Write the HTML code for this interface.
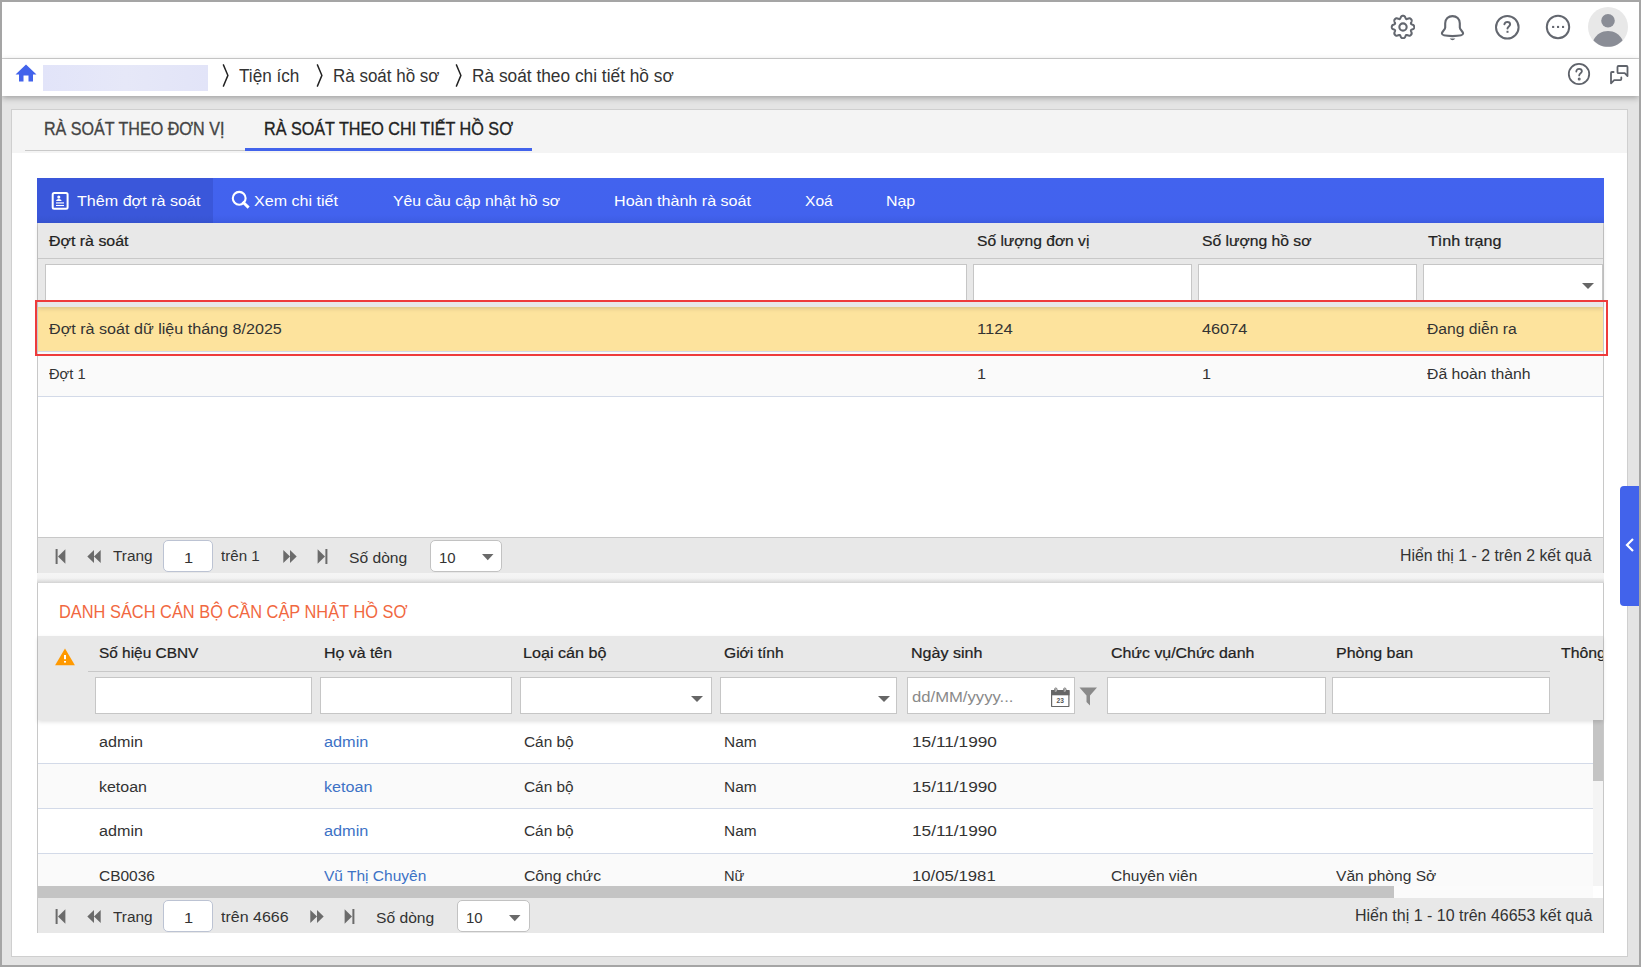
<!DOCTYPE html>
<html><head><meta charset="utf-8">
<style>
*{box-sizing:border-box;margin:0;padding:0}
html,body{width:1641px;height:967px;overflow:hidden;background:#e4e4e4;font-family:"Liberation Sans",sans-serif;color:#333;position:relative}
.a{position:absolute}
.t{position:absolute;white-space:nowrap;line-height:1}
.caret{position:absolute;width:0;height:0;border-left:6px solid transparent;border-right:6px solid transparent;border-top:6px solid #666}
</style></head><body>
<div class="a" style="left:0;top:0;width:1641px;height:967px;border:2px solid #a5a5a5;z-index:50"></div>
<div class="a" style="left:2px;top:2px;width:1637px;height:56px;background:#fff"></div>
<div class="a" style="left:2px;top:58px;width:1637px;height:1px;background:#d2d2d2"></div>
<div class="a" style="left:2px;top:59px;width:1637px;height:37px;background:#fff;box-shadow:0 2px 6px rgba(0,0,0,.3);z-index:3"></div>
<div class="a" style="left:11px;top:109px;width:1617px;height:848px;background:#fff;border:1px solid #cfcfcf"></div>
<div class="a" style="left:12px;top:110px;width:1615px;height:43px;background:#f4f4f4"></div>
<svg class="a" style="left:1390px;top:14px" width="25" height="25" viewBox="-0.5 -0.5 25 25" fill="none" stroke="#63676f" stroke-width="2.05"><path d="M12.50 1.30 L12.72 1.30 L12.94 1.32 L13.16 1.34 L13.37 1.40 L13.59 1.47 L13.79 1.58 L13.99 1.73 L14.18 1.91 L14.35 2.12 L14.52 2.36 L14.67 2.62 L14.81 2.89 L14.93 3.17 L15.05 3.45 L15.17 3.71 L15.28 3.95 L15.39 4.16 L15.51 4.34 L15.64 4.47 L15.79 4.55 L15.96 4.60 L16.14 4.60 L16.35 4.56 L16.58 4.49 L16.83 4.40 L17.09 4.30 L17.37 4.18 L17.66 4.08 L17.95 3.98 L18.25 3.90 L18.53 3.85 L18.80 3.82 L19.06 3.83 L19.31 3.87 L19.53 3.94 L19.73 4.03 L19.92 4.15 L20.10 4.28 L20.26 4.43 L20.42 4.58 L20.57 4.74 L20.72 4.90 L20.85 5.08 L20.97 5.27 L21.06 5.47 L21.13 5.69 L21.17 5.94 L21.18 6.20 L21.15 6.47 L21.10 6.75 L21.02 7.05 L20.92 7.34 L20.82 7.63 L20.70 7.91 L20.60 8.17 L20.51 8.42 L20.44 8.65 L20.40 8.86 L20.40 9.04 L20.45 9.21 L20.53 9.36 L20.66 9.49 L20.84 9.61 L21.05 9.72 L21.29 9.83 L21.55 9.95 L21.83 10.07 L22.11 10.19 L22.38 10.33 L22.64 10.48 L22.88 10.65 L23.09 10.82 L23.27 11.01 L23.42 11.21 L23.53 11.41 L23.60 11.63 L23.66 11.84 L23.68 12.06 L23.70 12.28 L23.70 12.50 L23.70 12.72 L23.68 12.94 L23.66 13.16 L23.60 13.37 L23.53 13.59 L23.42 13.79 L23.27 13.99 L23.09 14.18 L22.88 14.35 L22.64 14.52 L22.38 14.67 L22.11 14.81 L21.83 14.93 L21.55 15.05 L21.29 15.17 L21.05 15.28 L20.84 15.39 L20.66 15.51 L20.53 15.64 L20.45 15.79 L20.40 15.96 L20.40 16.14 L20.44 16.35 L20.51 16.58 L20.60 16.83 L20.70 17.09 L20.82 17.37 L20.92 17.66 L21.02 17.95 L21.10 18.25 L21.15 18.53 L21.18 18.80 L21.17 19.06 L21.13 19.31 L21.06 19.53 L20.97 19.73 L20.85 19.92 L20.72 20.10 L20.57 20.26 L20.42 20.42 L20.26 20.57 L20.10 20.72 L19.92 20.85 L19.73 20.97 L19.53 21.06 L19.31 21.13 L19.06 21.17 L18.80 21.18 L18.53 21.15 L18.25 21.10 L17.95 21.02 L17.66 20.92 L17.37 20.82 L17.09 20.70 L16.83 20.60 L16.58 20.51 L16.35 20.44 L16.14 20.40 L15.96 20.40 L15.79 20.45 L15.64 20.53 L15.51 20.66 L15.39 20.84 L15.28 21.05 L15.17 21.29 L15.05 21.55 L14.93 21.83 L14.81 22.11 L14.67 22.38 L14.52 22.64 L14.35 22.88 L14.18 23.09 L13.99 23.27 L13.79 23.42 L13.59 23.53 L13.37 23.60 L13.16 23.66 L12.94 23.68 L12.72 23.70 L12.50 23.70 L12.28 23.70 L12.06 23.68 L11.84 23.66 L11.63 23.60 L11.41 23.53 L11.21 23.42 L11.01 23.27 L10.82 23.09 L10.65 22.88 L10.48 22.64 L10.33 22.38 L10.19 22.11 L10.07 21.83 L9.95 21.55 L9.83 21.29 L9.72 21.05 L9.61 20.84 L9.49 20.66 L9.36 20.53 L9.21 20.45 L9.04 20.40 L8.86 20.40 L8.65 20.44 L8.42 20.51 L8.17 20.60 L7.91 20.70 L7.63 20.82 L7.34 20.92 L7.05 21.02 L6.75 21.10 L6.47 21.15 L6.20 21.18 L5.94 21.17 L5.69 21.13 L5.47 21.06 L5.27 20.97 L5.08 20.85 L4.90 20.72 L4.74 20.57 L4.58 20.42 L4.43 20.26 L4.28 20.10 L4.15 19.92 L4.03 19.73 L3.94 19.53 L3.87 19.31 L3.83 19.06 L3.82 18.80 L3.85 18.53 L3.90 18.25 L3.98 17.95 L4.08 17.66 L4.18 17.37 L4.30 17.09 L4.40 16.83 L4.49 16.58 L4.56 16.35 L4.60 16.14 L4.60 15.96 L4.55 15.79 L4.47 15.64 L4.34 15.51 L4.16 15.39 L3.95 15.28 L3.71 15.17 L3.45 15.05 L3.17 14.93 L2.89 14.81 L2.62 14.67 L2.36 14.52 L2.12 14.35 L1.91 14.18 L1.73 13.99 L1.58 13.79 L1.47 13.59 L1.40 13.37 L1.34 13.16 L1.32 12.94 L1.30 12.72 L1.30 12.50 L1.30 12.28 L1.32 12.06 L1.34 11.84 L1.40 11.63 L1.47 11.41 L1.58 11.21 L1.73 11.01 L1.91 10.82 L2.12 10.65 L2.36 10.48 L2.62 10.33 L2.89 10.19 L3.17 10.07 L3.45 9.95 L3.71 9.83 L3.95 9.72 L4.16 9.61 L4.34 9.49 L4.47 9.36 L4.55 9.21 L4.60 9.04 L4.60 8.86 L4.56 8.65 L4.49 8.42 L4.40 8.17 L4.30 7.91 L4.18 7.63 L4.08 7.34 L3.98 7.05 L3.90 6.75 L3.85 6.47 L3.82 6.20 L3.83 5.94 L3.87 5.69 L3.94 5.47 L4.03 5.27 L4.15 5.08 L4.28 4.90 L4.43 4.74 L4.58 4.58 L4.74 4.43 L4.90 4.28 L5.08 4.15 L5.27 4.03 L5.47 3.94 L5.69 3.87 L5.94 3.83 L6.20 3.82 L6.47 3.85 L6.75 3.90 L7.05 3.98 L7.34 4.08 L7.63 4.18 L7.91 4.30 L8.17 4.40 L8.42 4.49 L8.65 4.56 L8.86 4.60 L9.04 4.60 L9.21 4.55 L9.36 4.47 L9.49 4.34 L9.61 4.16 L9.72 3.95 L9.83 3.71 L9.95 3.45 L10.07 3.17 L10.19 2.89 L10.33 2.62 L10.48 2.36 L10.65 2.12 L10.82 1.91 L11.01 1.73 L11.21 1.58 L11.41 1.47 L11.63 1.40 L11.84 1.34 L12.06 1.32 L12.28 1.30Z"/><circle cx="12.5" cy="12.5" r="3.65" stroke-width="2.1"/></svg>
<svg class="a" style="left:1439px;top:13px" width="28" height="30" viewBox="0 0 28 30" fill="none" stroke="#63676f" stroke-width="2.1" stroke-linejoin="round"><path d="M6.2 14.6 V10.3 C6.2 6 9.4 3.1 13.5 3.1 C17.6 3.1 20.8 6 20.8 10.3 V14.6 C20.8 16.8 24.1 18.3 24.1 20.6 C24.1 22.3 19.5 23.1 13.5 23.1 C7.5 23.1 2.9 22.3 2.9 20.6 C2.9 18.3 6.2 16.8 6.2 14.6 Z"/><path d="M10.6 25.5 H16.4 Q13.5 28.9 10.6 25.5z" fill="#63676f" stroke="none"/></svg>
<svg class="a" style="left:1494px;top:14px" width="27" height="27" viewBox="0 0 27 27" fill="none" stroke="#63676f" stroke-width="2"><circle cx="13.3" cy="13.3" r="11.3"/><path d="M10.4 10.3c.4-1.4 1.5-2.2 2.9-2.2 1.6 0 2.8 1 2.8 2.4 0 1.8-2.6 2.1-2.6 4" stroke-linecap="round"/><rect x="12.5" y="16.8" width="2" height="2" fill="#63676f" stroke="none"/></svg>
<svg class="a" style="left:1545px;top:14px" width="27" height="27" viewBox="0 0 27 27" fill="none" stroke="#63676f" stroke-width="2"><circle cx="13" cy="13" r="11.2"/><rect x="7.1" y="11.9" width="2.1" height="2.1" fill="#63676f" stroke="none"/><rect x="12" y="11.9" width="2.1" height="2.1" fill="#63676f" stroke="none"/><rect x="17" y="11.9" width="2.1" height="2.1" fill="#63676f" stroke="none"/></svg>
<svg class="a" style="left:1588px;top:7px" width="40" height="40" viewBox="0 0 40 40"><circle cx="20" cy="20" r="20" fill="#e8e8e8"/><circle cx="20" cy="13.8" r="6.8" fill="#8a8d96"/><path d="M5.4 33.2C8.5 27 14 24 20 24S31.5 27 34.6 33.2C31 37.5 25.5 39.8 20 39.8S9 37.5 5.4 33.2z" fill="#8a8d96"/></svg>
<svg class="a" style="left:15px;top:64px;z-index:4" width="22" height="18" viewBox="0 0 22 18"><path d="M11 .5 L21.5 10.5 H18 V17.5 H13.5 V11.5 H8.5 V17.5 H4 V10.5 H.5 Z" fill="#4263eb"/></svg>
<div class="a" style="left:43px;top:65px;width:165px;height:26px;background:linear-gradient(90deg,#e2e4f9,#e6e8f8 50%,#e2e4f8);z-index:4"></div>
<svg class="a" style="left:221px;top:64px;z-index:4" width="9" height="24" viewBox="0 0 9 24"><path d="M2.2 0.4 L6.9 11.4 L2.2 22.6" fill="none" stroke="#222" stroke-width="1.45"/></svg>
<svg class="a" style="left:315px;top:64px;z-index:4" width="9" height="24" viewBox="0 0 9 24"><path d="M2.2 0.4 L6.9 11.4 L2.2 22.6" fill="none" stroke="#222" stroke-width="1.45"/></svg>
<svg class="a" style="left:454px;top:64px;z-index:4" width="9" height="24" viewBox="0 0 9 24"><path d="M2.2 0.4 L6.9 11.4 L2.2 22.6" fill="none" stroke="#222" stroke-width="1.45"/></svg>
<div class="t" style="left:239.10px;top:67px;font-size:18px;transform:scaleX(0.9533);transform-origin:0 0;z-index:4">Tiện ích</div>
<div class="t" style="left:333.40px;top:67px;font-size:18px;transform:scaleX(0.9428);transform-origin:0 0;z-index:4">Rà soát hồ sơ</div>
<div class="t" style="left:471.60px;top:67px;font-size:18px;transform:scaleX(0.9613);transform-origin:0 0;z-index:4">Rà soát theo chi tiết hồ sơ</div>
<svg class="a" style="left:1567px;top:62px;z-index:4" width="24" height="24" viewBox="0 0 24 24" fill="none" stroke="#5f636b" stroke-width="1.8"><circle cx="12" cy="12" r="10.2"/><path d="M9.3 9.5c0-1.6 1.2-2.7 2.8-2.7 1.6 0 2.8 1 2.8 2.5 0 1.8-2.7 2.1-2.7 4.1" stroke-linecap="round"/><circle cx="12.2" cy="16.9" r=".6" fill="#5f636b"/></svg>
<svg class="a" style="left:1608px;top:64px;z-index:4" width="22" height="22" viewBox="0 0 22 22" fill="none" stroke="#5f636b" stroke-width="1.8" stroke-linejoin="round" stroke-linecap="round"><path d="M10.5 2 H18.5 Q19.5 2 19.5 3 V12 L16.7 9.2 H10.5 Q9.5 9.2 9.5 8.2 V3 Q9.5 2 10.5 2 Z"/><path d="M5.6 8 H4 Q3 8 3 9 V19.3 L6.2 16.1 H12.3 Q13.3 16.1 13.3 15.1 V13.4"/></svg>
<div class="t" style="left:43.90px;top:120px;font-size:18px;transform:scaleX(0.8938);transform-origin:0 0;color:#444;-webkit-text-stroke:0.35px #444">RÀ SOÁT THEO ĐƠN VỊ</div>
<div class="t" style="left:264.00px;top:120px;font-size:18px;transform:scaleX(0.8984);transform-origin:0 0;color:#222;-webkit-text-stroke:0.35px #222">RÀ SOÁT THEO CHI TIẾT HỒ SƠ</div>
<div class="a" style="left:25px;top:150px;width:220px;height:1px;background:#c9c9c9"></div>
<div class="a" style="left:245px;top:148px;width:287px;height:3px;background:#4263eb"></div>
<div class="a" style="left:37px;top:178px;width:1567px;height:45px;background:linear-gradient(#4263ee 0%,#4262ee 82%,#3d5ce2 100%)"></div>
<div class="a" style="left:37px;top:178px;width:176px;height:45px;background:linear-gradient(#3a57da 0%,#3a57da 82%,#3653d0 100%)"></div>
<svg class="a" style="left:51px;top:191px" width="19" height="20" viewBox="0 0 19 20" fill="none" stroke="#fff"><rect x="1.7" y="2" width="14.9" height="15.8" rx="1.5" stroke-width="2"/><circle cx="7.8" cy="6.1" r="1.55" fill="#fff" stroke="none"/><path d="M5 10c.3-1.3 1.4-2 2.8-2s2.5.7 2.9 2z" fill="#fff" stroke="none"/><path d="M5 11.9h8" stroke-width="1.8" opacity=".65"/><path d="M5 14.5h8" stroke-width="1.1"/></svg>
<svg class="a" style="left:230px;top:189px" width="21" height="21" viewBox="0 0 21 21" fill="none" stroke="#fff" stroke-width="2.1"><circle cx="9.2" cy="9.3" r="6.4"/><path d="M13.6 13.8 L17.6 17.6" stroke-width="2.9" stroke-linecap="square"/></svg>
<div class="t" style="left:77.10px;top:193px;font-size:15px;transform:scaleX(1.0740);transform-origin:0 0;color:#fff">Thêm đợt rà soát</div>
<div class="t" style="left:253.90px;top:193px;font-size:15px;transform:scaleX(1.0700);transform-origin:0 0;color:#fff">Xem chi tiết</div>
<div class="t" style="left:392.80px;top:193px;font-size:15px;transform:scaleX(1.0502);transform-origin:0 0;color:#fff">Yêu cầu cập nhật hồ sơ</div>
<div class="t" style="left:614.00px;top:193px;font-size:15px;transform:scaleX(1.0739);transform-origin:0 0;color:#fff">Hoàn thành rà soát</div>
<div class="t" style="left:804.90px;top:193px;font-size:15px;transform:scaleX(1.0375);transform-origin:0 0;color:#fff">Xoá</div>
<div class="t" style="left:886.40px;top:193px;font-size:15px;transform:scaleX(1.0609);transform-origin:0 0;color:#fff">Nạp</div>
<div class="a" style="left:37px;top:223px;width:1567px;height:314px;background:#fff;border-left:1px solid #c8c8c8;border-right:1px solid #c8c8c8"></div>
<div class="a" style="left:38px;top:223px;width:1565px;height:84px;background:#e8e8e8;box-shadow:0 2px 4px rgba(0,0,0,.12);z-index:1"></div>
<div class="a" style="left:38px;top:258px;width:1565px;height:1px;background:#c8c8c8;z-index:1"></div>
<div class="t" style="left:48.60px;top:233px;font-size:15.5px;transform:scaleX(1.0279);transform-origin:0 0;color:#222;-webkit-text-stroke:0.22px #222;z-index:2">Đợt rà soát</div>
<div class="t" style="left:977.40px;top:233px;font-size:15.5px;transform:scaleX(1.0061);transform-origin:0 0;color:#222;-webkit-text-stroke:0.22px #222;z-index:2">Số lượng đơn vị</div>
<div class="t" style="left:1201.80px;top:233px;font-size:15.5px;transform:scaleX(1.0114);transform-origin:0 0;color:#222;-webkit-text-stroke:0.22px #222;z-index:2">Số lượng hồ sơ</div>
<div class="t" style="left:1427.70px;top:233px;font-size:15.5px;transform:scaleX(1.0405);transform-origin:0 0;color:#222;-webkit-text-stroke:0.22px #222;z-index:2">Tình trạng</div>
<div class="a" style="left:45px;top:264px;width:922px;height:37px;background:#fff;border:1px solid #c6c6c6;z-index:2"></div>
<div class="a" style="left:973px;top:264px;width:219px;height:37px;background:#fff;border:1px solid #c6c6c6;z-index:2"></div>
<div class="a" style="left:1198px;top:264px;width:219px;height:37px;background:#fff;border:1px solid #c6c6c6;z-index:2"></div>
<div class="a" style="left:1423px;top:264px;width:180px;height:37px;background:#fff;border:1px solid #c6c6c6;z-index:2"></div>
<div class="caret" style="left:1582px;top:283px;z-index:3"></div>
<div class="a" style="left:38px;top:307px;width:1565px;height:44px;background:#fde39d"></div>
<div class="a" style="left:38px;top:351px;width:1565px;height:1px;background:#d3dae8"></div>
<div class="a" style="left:38px;top:352px;width:1565px;height:44px;background:#fafafa"></div>
<div class="a" style="left:38px;top:396px;width:1565px;height:1px;background:#d3dae8"></div>
<div class="t" style="left:48.90px;top:321px;font-size:15.2px;transform:scaleX(1.0612);transform-origin:0 0;color:#333">Đợt rà soát dữ liệu tháng 8/2025</div>
<div class="t" style="left:977.40px;top:321px;font-size:15.2px;transform:scaleX(1.0955);transform-origin:0 0;color:#333">1124</div>
<div class="t" style="left:1202.00px;top:321px;font-size:15.2px;transform:scaleX(1.0720);transform-origin:0 0;color:#333">46074</div>
<div class="t" style="left:1427.40px;top:321px;font-size:15.2px;transform:scaleX(1.0315);transform-origin:0 0;color:#333">Đang diễn ra</div>
<div class="t" style="left:48.90px;top:366px;font-size:15.2px;transform:scaleX(0.9670);transform-origin:0 0;color:#333">Đợt 1</div>
<div class="t" style="left:977.40px;top:366px;font-size:15.2px;transform:scaleX(1.0700);transform-origin:0 0;color:#333">1</div>
<div class="t" style="left:1202.00px;top:366px;font-size:15.2px;transform:scaleX(1.0700);transform-origin:0 0;color:#333">1</div>
<div class="t" style="left:1427.40px;top:366px;font-size:15.2px;transform:scaleX(1.0386);transform-origin:0 0;color:#333">Đã hoàn thành</div>
<div class="a" style="left:35px;top:300px;width:1573px;height:56px;border:2px solid #ee3b3b;z-index:5"></div>
<div class="a" style="left:37px;top:537px;width:1567px;height:36px;background:#e8e8e8;border-left:1px solid #c8c8c8;border-right:1px solid #c8c8c8;border-top:1px solid #c8c8c8;"></div>
<svg class="a" style="left:55px;top:549px" width="11" height="15" viewBox="0 0 11 15"><rect x="0.6" y="0" width="2" height="15" fill="#6b6b6b"/><path d="M10.4 0.3 L3 7.5 L10.4 14.7z" fill="#6b6b6b"/></svg>
<svg class="a" style="left:86.8px;top:549.5px" width="14" height="13" viewBox="0 0 14 13"><path d="M7 0 L0.3 6.5 L7 13z M13.7 0 L7 6.5 L13.7 13z" fill="#6b6b6b"/></svg>
<div class="t" style="left:113.00px;top:548px;font-size:15.3px;transform:scaleX(1.0051);transform-origin:0 0;color:#333">Trang</div>
<div class="a" style="left:163px;top:540px;width:50px;height:31.5px;background:#fff;border:1px solid #bcc3d3;border-radius:5px"></div>
<div class="t" style="left:183.50px;top:550px;font-size:15.3px;transform:scaleX(1.0700);transform-origin:0 0;color:#333">1</div>
<div class="t" style="left:221.40px;top:548px;font-size:15.3px;transform:scaleX(0.9890);transform-origin:0 0;color:#333">trên 1</div>
<svg class="a" style="left:283px;top:549.5px" width="14" height="13" viewBox="0 0 14 13"><path d="M0.3 0 L7 6.5 L0.3 13z M7 0 L13.7 6.5 L7 13z" fill="#6b6b6b"/></svg>
<svg class="a" style="left:316.8px;top:549px" width="11" height="15" viewBox="0 0 11 15"><path d="M0.6 0.3 L8 7.5 L0.6 14.7z" fill="#6b6b6b"/><rect x="8.4" y="0" width="2" height="15" fill="#6b6b6b"/></svg>
<div class="t" style="left:348.80px;top:550px;font-size:15.3px;transform:scaleX(1.0212);transform-origin:0 0;color:#333">Số dòng</div>
<div class="a" style="left:430px;top:540px;width:72px;height:31.5px;background:#fff;border:1px solid #c2c2c2;border-radius:5px"></div>
<div class="t" style="left:438.60px;top:550px;font-size:15.3px;transform:scaleX(0.9753);transform-origin:0 0;color:#333">10</div>
<svg class="a" style="left:482px;top:554px" width="12" height="7" viewBox="0 0 12 7"><path d="M0 0 H11.5 L5.75 6.3z" fill="#6a6a6a"/></svg>
<div class="t" style="left:1400.40px;top:548px;font-size:15.6px;transform:scaleX(1.0180);transform-origin:0 0;color:#333">Hiển thị 1 - 2 trên 2 kết quả</div>
<div class="a" style="left:37px;top:573px;width:1567px;height:10px;background:linear-gradient(#f5f5f5 0%,#f3f3f3 50%,#e2e2e2 80%,#d3d3d3 100%)"></div>
<div class="a" style="left:37px;top:583px;width:1px;height:350px;background:#c8c8c8"></div>
<div class="a" style="left:1603px;top:583px;width:1px;height:350px;background:#c8c8c8"></div>
<div class="t" style="left:58.70px;top:603px;font-size:18px;transform:scaleX(0.9103);transform-origin:0 0;color:#f1683f">DANH SÁCH CÁN BỘ CẦN CẬP NHẬT HỒ SƠ</div>
<div class="a" style="left:38px;top:636px;width:1565px;height:84px;background:#e8e8e8;box-shadow:0 2px 4px rgba(0,0,0,.12);z-index:1"></div>
<div class="a" style="left:88px;top:671px;width:1462px;height:1px;background:#c8c8c8;z-index:1"></div>
<svg class="a" style="left:55px;top:647.5px;z-index:2" width="20" height="18" viewBox="0 0 20 18"><path d="M10 .6 L19.9 17.3 H.1z" fill="#ff9900"/><rect x="9" y="7" width="2" height="4.2" fill="#fff"/><rect x="9" y="13" width="2" height="1.6" fill="#fff"/></svg>
<div class="t" style="left:99.00px;top:645px;font-size:15.5px;transform:scaleX(0.9936);transform-origin:0 0;color:#222;-webkit-text-stroke:0.22px #222;z-index:2">Số hiệu CBNV</div>
<div class="t" style="left:323.50px;top:645px;font-size:15.5px;transform:scaleX(1.0250);transform-origin:0 0;color:#222;-webkit-text-stroke:0.22px #222;z-index:2">Họ và tên</div>
<div class="t" style="left:523.40px;top:645px;font-size:15.5px;transform:scaleX(1.0420);transform-origin:0 0;color:#222;-webkit-text-stroke:0.22px #222;z-index:2">Loại cán bộ</div>
<div class="t" style="left:723.60px;top:645px;font-size:15.5px;transform:scaleX(1.0070);transform-origin:0 0;color:#222;-webkit-text-stroke:0.22px #222;z-index:2">Giới tính</div>
<div class="t" style="left:911.00px;top:645px;font-size:15.5px;transform:scaleX(1.0357);transform-origin:0 0;color:#222;-webkit-text-stroke:0.22px #222;z-index:2">Ngày sinh</div>
<div class="t" style="left:1110.90px;top:645px;font-size:15.5px;transform:scaleX(1.0268);transform-origin:0 0;color:#222;-webkit-text-stroke:0.22px #222;z-index:2">Chức vụ/Chức danh</div>
<div class="t" style="left:1336.00px;top:645px;font-size:15.5px;transform:scaleX(1.0296);transform-origin:0 0;color:#222;-webkit-text-stroke:0.22px #222;z-index:2">Phòng ban</div>
<div class="a" style="left:1550px;top:640px;width:53px;height:30px;overflow:hidden;z-index:2"><div class="t" style="left:11.00px;top:5px;font-size:15.5px;transform:scaleX(1.0200);transform-origin:0 0;color:#222;-webkit-text-stroke:0.22px #222">Thông tin</div>
</div>
<div class="a" style="left:95px;top:677px;width:217px;height:37px;background:#fff;border:1px solid #c6c6c6;z-index:2"></div>
<div class="a" style="left:320px;top:677px;width:192px;height:37px;background:#fff;border:1px solid #c6c6c6;z-index:2"></div>
<div class="a" style="left:520px;top:677px;width:192px;height:37px;background:#fff;border:1px solid #c6c6c6;z-index:2"></div>
<div class="a" style="left:720px;top:677px;width:177px;height:37px;background:#fff;border:1px solid #c6c6c6;z-index:2"></div>
<div class="a" style="left:907px;top:677px;width:168px;height:37px;background:#fff;border:1px solid #c6c6c6;z-index:2"></div>
<div class="a" style="left:1107px;top:677px;width:219px;height:37px;background:#fff;border:1px solid #c6c6c6;z-index:2"></div>
<div class="a" style="left:1332px;top:677px;width:218px;height:37px;background:#fff;border:1px solid #c6c6c6;z-index:2"></div>
<div class="caret" style="left:690.5px;top:696px;z-index:3"></div>
<div class="caret" style="left:877.5px;top:696px;z-index:3"></div>
<div class="t" style="left:912.30px;top:689px;font-size:15.5px;transform:scaleX(1.0738);transform-origin:0 0;color:#8a8a8a;z-index:3">dd/MM/yyyy...</div>
<svg class="a" style="left:1050px;top:687px;z-index:3" width="21" height="21" viewBox="0 0 21 21"><rect x="1.6" y="3.6" width="17.3" height="15.9" rx="0.6" fill="#fff" stroke="#666" stroke-width="1.2"/><rect x="1" y="3" width="18.5" height="5.3" fill="#666"/><rect x="4.6" y="1" width="2.4" height="4" rx="1.2" fill="#fff" stroke="#666" stroke-width="0.9"/><rect x="13.6" y="1" width="2.4" height="4" rx="1.2" fill="#fff" stroke="#666" stroke-width="0.9"/><rect x="5.4" y="2" width="0.8" height="2" fill="#666"/><rect x="14.4" y="2" width="0.8" height="2" fill="#666"/><text x="10.2" y="15.9" font-size="6.6" font-weight="bold" font-family="Liberation Sans" text-anchor="middle" fill="#555">23</text></svg>
<svg class="a" style="left:1079px;top:687px;z-index:3" width="19" height="19" viewBox="0 0 19 19"><path d="M.5 .5 H18 L11 8.5 V18.5 L7.5 15 V8.5z" fill="#8a8a8a"/></svg>
<div class="a" style="left:38px;top:720px;width:1555px;height:43px;background:#fff"></div>
<div class="a" style="left:38px;top:763px;width:1555px;height:1px;background:#d3dae8"></div>
<div class="t" style="left:98.60px;top:734px;font-size:15.2px;transform:scaleX(1.0633);transform-origin:0 0;color:#333">admin</div>
<div class="t" style="left:323.50px;top:734px;font-size:15.2px;transform:scaleX(1.0729);transform-origin:0 0;color:#3d72c6">admin</div>
<div class="t" style="left:523.70px;top:734px;font-size:15.2px;transform:scaleX(1.0139);transform-origin:0 0;color:#333">Cán bộ</div>
<div class="t" style="left:724.20px;top:734px;font-size:15.2px;transform:scaleX(1.0153);transform-origin:0 0;color:#333">Nam</div>
<div class="t" style="left:911.60px;top:734px;font-size:15.2px;transform:scaleX(1.1343);transform-origin:0 0;color:#333">15/11/1990</div>
<div class="a" style="left:38px;top:764px;width:1555px;height:44px;background:#fafafa"></div>
<div class="a" style="left:38px;top:808px;width:1555px;height:1px;background:#d3dae8"></div>
<div class="t" style="left:98.60px;top:779px;font-size:15.2px;transform:scaleX(1.0518);transform-origin:0 0;color:#333">ketoan</div>
<div class="t" style="left:323.50px;top:779px;font-size:15.2px;transform:scaleX(1.0627);transform-origin:0 0;color:#3d72c6">ketoan</div>
<div class="t" style="left:523.70px;top:779px;font-size:15.2px;transform:scaleX(1.0139);transform-origin:0 0;color:#333">Cán bộ</div>
<div class="t" style="left:724.20px;top:779px;font-size:15.2px;transform:scaleX(1.0153);transform-origin:0 0;color:#333">Nam</div>
<div class="t" style="left:911.60px;top:779px;font-size:15.2px;transform:scaleX(1.1343);transform-origin:0 0;color:#333">15/11/1990</div>
<div class="a" style="left:38px;top:809px;width:1555px;height:44px;background:#fff"></div>
<div class="a" style="left:38px;top:853px;width:1555px;height:1px;background:#d3dae8"></div>
<div class="t" style="left:98.60px;top:823px;font-size:15.2px;transform:scaleX(1.0633);transform-origin:0 0;color:#333">admin</div>
<div class="t" style="left:323.50px;top:823px;font-size:15.2px;transform:scaleX(1.0729);transform-origin:0 0;color:#3d72c6">admin</div>
<div class="t" style="left:523.70px;top:823px;font-size:15.2px;transform:scaleX(1.0139);transform-origin:0 0;color:#333">Cán bộ</div>
<div class="t" style="left:724.20px;top:823px;font-size:15.2px;transform:scaleX(1.0153);transform-origin:0 0;color:#333">Nam</div>
<div class="t" style="left:911.60px;top:823px;font-size:15.2px;transform:scaleX(1.1343);transform-origin:0 0;color:#333">15/11/1990</div>
<div class="a" style="left:38px;top:854px;width:1555px;height:32px;background:#fafafa"></div>
<div class="t" style="left:98.60px;top:868px;font-size:15.2px;transform:scaleX(1.0191);transform-origin:0 0;color:#333">CB0036</div>
<div class="t" style="left:323.50px;top:868px;font-size:15.2px;transform:scaleX(1.0211);transform-origin:0 0;color:#3d72c6">Vũ Thị Chuyên</div>
<div class="t" style="left:523.70px;top:868px;font-size:15.2px;transform:scaleX(1.0362);transform-origin:0 0;color:#333">Công chức</div>
<div class="t" style="left:724.20px;top:868px;font-size:15.2px;transform:scaleX(0.9638);transform-origin:0 0;color:#333">Nữ</div>
<div class="t" style="left:911.60px;top:868px;font-size:15.2px;transform:scaleX(1.1015);transform-origin:0 0;color:#333">10/05/1981</div>
<div class="t" style="left:1110.90px;top:868px;font-size:15.2px;transform:scaleX(1.0223);transform-origin:0 0;color:#333">Chuyên viên</div>
<div class="t" style="left:1336.00px;top:868px;font-size:15.2px;transform:scaleX(1.0250);transform-origin:0 0;color:#333">Văn phòng Sở</div>
<div class="a" style="left:38px;top:886px;width:1555px;height:12px;background:#fbfbfb;z-index:1"></div>
<div class="a" style="left:38px;top:886px;width:1356px;height:12px;background:#c4c4c4;z-index:1"></div>
<div class="a" style="left:1593px;top:720px;width:10px;height:166px;background:#f4f4f4"></div>
<div class="a" style="left:1593px;top:720px;width:10px;height:61px;background:#c4c4c4"></div>
<div class="a" style="left:1593px;top:886px;width:10px;height:12px;background:#fff;z-index:1"></div>
<div class="a" style="left:37px;top:898px;width:1567px;height:35px;background:#e8e8e8;border-left:1px solid #c8c8c8;border-right:1px solid #c8c8c8;"></div>
<svg class="a" style="left:55px;top:909px" width="11" height="15" viewBox="0 0 11 15"><rect x="0.6" y="0" width="2" height="15" fill="#6b6b6b"/><path d="M10.4 0.3 L3 7.5 L10.4 14.7z" fill="#6b6b6b"/></svg>
<svg class="a" style="left:86.8px;top:909.5px" width="14" height="13" viewBox="0 0 14 13"><path d="M7 0 L0.3 6.5 L7 13z M13.7 0 L7 6.5 L13.7 13z" fill="#6b6b6b"/></svg>
<div class="t" style="left:113.00px;top:909px;font-size:15.3px;transform:scaleX(1.0051);transform-origin:0 0;color:#333">Trang</div>
<div class="a" style="left:163px;top:900px;width:50px;height:31.5px;background:#fff;border:1px solid #bcc3d3;border-radius:5px"></div>
<div class="t" style="left:183.50px;top:910px;font-size:15.3px;transform:scaleX(1.0700);transform-origin:0 0;color:#333">1</div>
<div class="t" style="left:221.40px;top:909px;font-size:15.3px;transform:scaleX(1.0458);transform-origin:0 0;color:#333">trên 4666</div>
<svg class="a" style="left:310px;top:909.5px" width="14" height="13" viewBox="0 0 14 13"><path d="M0.3 0 L7 6.5 L0.3 13z M7 0 L13.7 6.5 L7 13z" fill="#6b6b6b"/></svg>
<svg class="a" style="left:344.3px;top:909px" width="11" height="15" viewBox="0 0 11 15"><path d="M0.6 0.3 L8 7.5 L0.6 14.7z" fill="#6b6b6b"/><rect x="8.4" y="0" width="2" height="15" fill="#6b6b6b"/></svg>
<div class="t" style="left:376.10px;top:910px;font-size:15.3px;transform:scaleX(1.0212);transform-origin:0 0;color:#333">Số dòng</div>
<div class="a" style="left:457.3px;top:900px;width:73px;height:31.5px;background:#fff;border:1px solid #c2c2c2;border-radius:5px"></div>
<div class="t" style="left:465.90px;top:910px;font-size:15.3px;transform:scaleX(0.9753);transform-origin:0 0;color:#333">10</div>
<svg class="a" style="left:509.3px;top:915px" width="12" height="7" viewBox="0 0 12 7"><path d="M0 0 H11.5 L5.75 6.3z" fill="#6a6a6a"/></svg>
<div class="t" style="left:1354.60px;top:908px;font-size:15.6px;transform:scaleX(1.0251);transform-origin:0 0;color:#333">Hiển thị 1 - 10 trên 46653 kết quả</div>
<div class="a" style="left:1620px;top:486px;width:21px;height:120px;background:#4263eb;border-radius:4px 0 0 4px;z-index:6"></div>
<svg class="a" style="left:1624px;top:537px;z-index:7" width="12" height="16" viewBox="0 0 12 16"><path d="M9 2 L3 8 L9 14" fill="none" stroke="#fff" stroke-width="2.2"/></svg>
</body></html>
